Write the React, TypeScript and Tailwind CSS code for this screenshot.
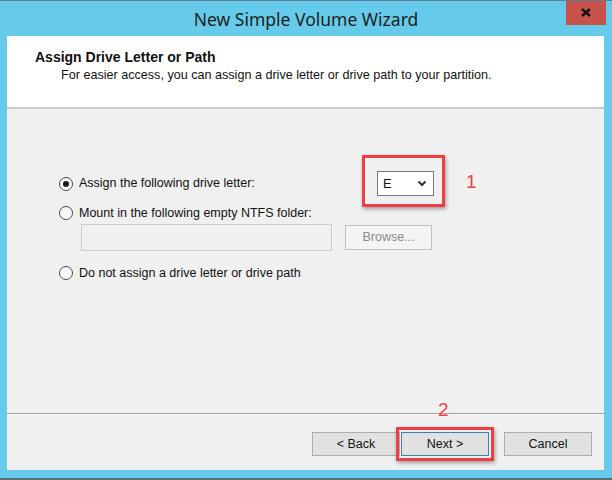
import React from "react";

const font = { fontFamily: '"Liberation Sans", Arial, sans-serif' };

function Radio({ checked }: { checked?: boolean }) {
  return (
    <div className="w-[14px] h-[14px] rounded-full border border-[#4a4a4a] bg-gradient-to-b from-[#f4f4f4] to-[#ffffff] flex items-center justify-center shrink-0">
      {checked && <div className="w-[6px] h-[6px] rounded-full bg-[#1a1a1a]" />}
    </div>
  );
}

export default function App() {
  return (
    <div
      className="w-[612px] h-[480px] bg-[#66cbea] border-t border-[#5b7f90] flex flex-col relative overflow-hidden"
      style={font}
    >
      {/* title bar */}
      <div className="h-[35px] flex items-center justify-center relative shrink-0">
        <span className="text-[17.5px] text-[#1e1e1e] mt-[1px]" style={{ fontFamily: '"Noto Sans", "Open Sans", sans-serif' }}>
          New Simple Volume Wizard
        </span>
        <div className="absolute top-[-1px] left-[566px] w-[40px] h-[25px] bg-[#c7524a] flex items-center justify-center">
          <svg width="10" height="9" viewBox="0 0 10 9">
            <path d="M1 1 L9 8 M9 1 L1 8" stroke="#111" strokeWidth="2.4" />
          </svg>
        </div>
      </div>

      {/* client */}
      <div className="ml-[7px] w-[597px] h-[434px] bg-[#f0f0f0] flex flex-col text-[12.5px] text-[#111]">
        {/* header */}
        <div className="h-[73px] bg-white border-b-2 border-[#c9c9c9] pl-[28px] pt-[13px] shrink-0">
          <div className="font-bold text-[14px] leading-[16px]">Assign Drive Letter or Path</div>
          <div className="pl-[26px] mt-[3px] leading-[15px] text-[12.6px]">
            For easier access, you can assign a drive letter or drive path to your partition.
          </div>
        </div>

        {/* body */}
        <div className="flex-1 flex flex-col pl-[52px] pt-[62px] relative">
          <div className="flex items-center h-[25px]">
            <div className="flex items-center gap-[6px] w-[318px]">
              <Radio checked />
              <span>Assign the following drive letter:</span>
            </div>
            <div className="w-[57px] h-[25px] bg-white border border-[#7a7a7a] flex items-center justify-between pl-[5px] pr-[6px] text-[13px]">
              <span>E</span>
              <svg width="10" height="7" viewBox="0 0 10 7">
                <path d="M1.5 1.5 L5 5 L8.5 1.5" stroke="#333" strokeWidth="2" fill="none" />
              </svg>
            </div>
          </div>
          <div className="flex items-center gap-[6px] h-[16px] mt-[9px]">
            <Radio />
            <span>Mount in the following empty NTFS folder:</span>
          </div>
          <div className="flex items-center mt-[3px] pl-[22px] gap-[13px]">
            <div className="w-[251px] h-[27px] border border-[#cccccc] bg-[#f0f0f0]" />
            <div className="w-[87px] h-[25px] border border-[#bfbfbf] bg-[#f4f4f4] flex items-center justify-center text-[#8a8a8a]">
              Browse...
            </div>
          </div>
          <div className="flex items-center gap-[6px] h-[16px] mt-[14px]">
            <Radio />
            <span>Do not assign a drive letter or drive path</span>
          </div>

          {/* annotation 1 */}
          <div className="absolute left-[355px] top-[46px] w-[83px] h-[52px] border-[3px] border-[#ee3f45] shadow-[1px_2px_4px_rgba(0,0,0,0.35)]" />
          <div className="absolute left-[459px] top-[62px] text-[19px] leading-[22px] text-[#ee3f45]">1</div>
        </div>

        {/* separator */}
        <div className="h-[2px] border-t border-[#a0a0a0] bg-white/70 shrink-0" />

        {/* footer */}
        <div className="h-[55px] flex items-start justify-end pr-[12px] pt-[17px] relative shrink-0 text-[12.5px]">
          <div className="w-[88px] h-[24px] border border-[#adadad] bg-[#e1e1e1] flex items-center justify-center">&lt; Back</div>
          <div className="w-[88px] h-[24px] ml-[1px] border border-[#3c7fb1] bg-[#e1e1e1] flex items-center justify-center">Next &gt;</div>
          <div className="w-[88px] h-[24px] ml-[15px] border border-[#adadad] bg-[#e1e1e1] flex items-center justify-center">Cancel</div>

          {/* annotation 2 */}
          <div className="absolute left-[389px] top-[12px] w-[98px] h-[34px] border-[3px] border-[#ee3f45] shadow-[1px_2px_4px_rgba(0,0,0,0.35)]" />
          <div className="absolute left-[431px] top-[-16px] text-[19px] leading-[22px] text-[#ee3f45]">2</div>
        </div>
      </div>
      <div className="flex-1" />
      <div className="h-[2px] bg-[#5b6b72] shrink-0" />
    </div>
  );
}
